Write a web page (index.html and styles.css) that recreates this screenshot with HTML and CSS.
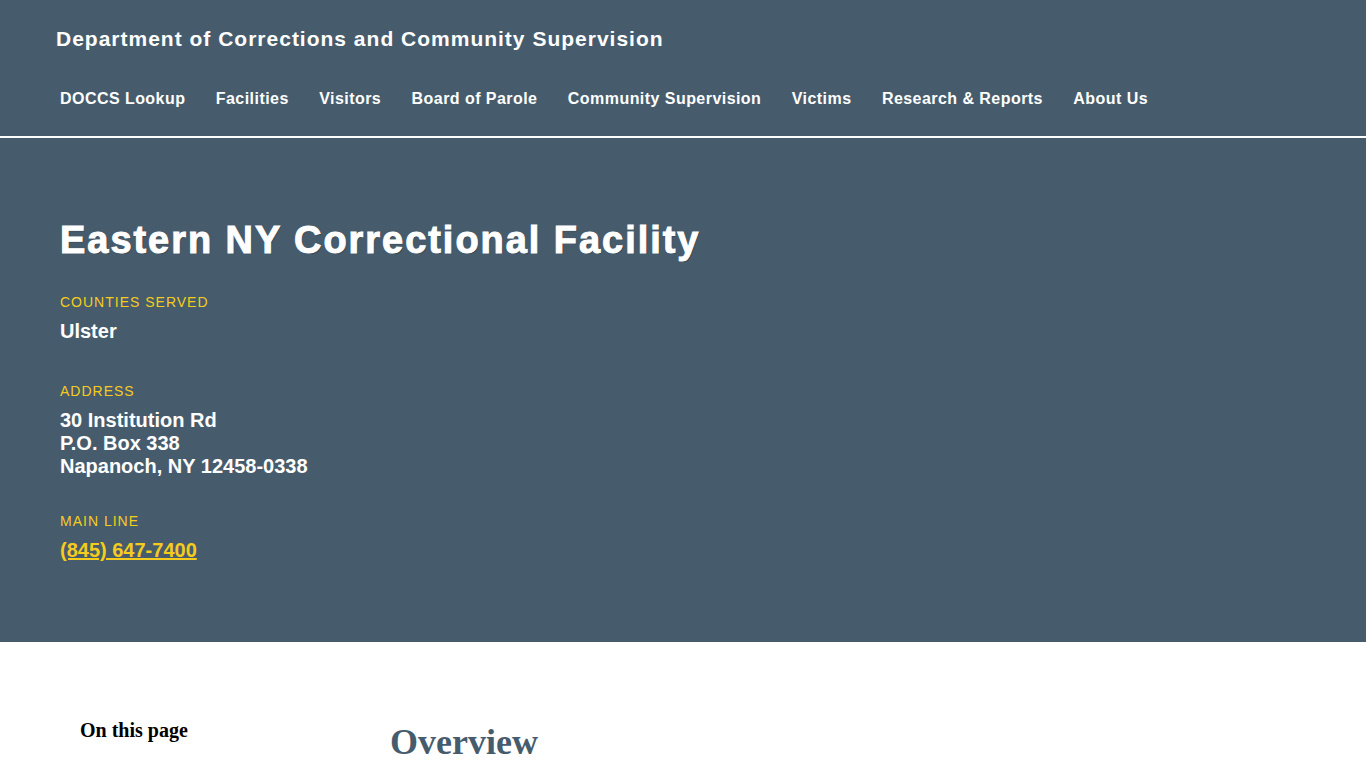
FILE: index.html
```html
<!DOCTYPE html>
<html lang="en">
<head>
<meta charset="utf-8">
<title>Eastern NY Correctional Facility</title>
<link rel="stylesheet" href="styles.css">
</head>
<body>
<header class="site-header">
  <div class="site-title">Department of Corrections and Community Supervision</div>
  <nav class="main-nav">
    <a href="#">DOCCS Lookup</a>
    <a href="#">Facilities</a>
    <a href="#">Visitors</a>
    <a href="#">Board of Parole</a>
    <a href="#">Community Supervision</a>
    <a href="#">Victims</a>
    <a href="#">Research &amp; Reports</a>
    <a href="#">About Us</a>
  </nav>
</header>
<section class="hero">
  <h1 class="hero-title">Eastern NY Correctional Facility</h1>
  <div class="field field-counties">
    <div class="field-label">COUNTIES SERVED</div>
    <div class="field-value">Ulster</div>
  </div>
  <div class="field field-address">
    <div class="field-label">ADDRESS</div>
    <div class="field-value">30 Institution Rd<br>P.O. Box 338<br>Napanoch, NY 12458-0338</div>
  </div>
  <div class="field field-phone">
    <div class="field-label">MAIN LINE</div>
    <div class="field-value"><a class="phone" href="#">(845) 647-7400</a></div>
  </div>
</section>
<main class="content">
  <aside class="toc">
    <h2 class="toc-title">On this page</h2>
  </aside>
  <article class="body">
    <h2 class="section-title">Overview</h2>
  </article>
</main>
</body>
</html>
```

FILE: styles.css
```css
html, body {
  margin: 0;
  padding: 0;
  background: #ffffff;
}

body {
  font-family: "Liberation Serif", "Times New Roman", serif;
}

.site-header {
  background: #465c6d;
  padding: 27px 0 27px 0;
  border-bottom: 2px solid #ffffff;
}

.site-title {
  font-family: "Liberation Sans", Arial, sans-serif;
  font-weight: bold;
  font-size: 21px;
  line-height: 24px;
  letter-spacing: 1px;
  color: #ffffff;
  padding-left: 56px;
}

.main-nav {
  display: flex;
  padding-left: 60px;
  margin-top: 38px;
  gap: 30.4px;
}

.main-nav a {
  font-family: "Liberation Sans", Arial, sans-serif;
  font-weight: bold;
  font-size: 16px;
  line-height: 20px;
  color: #ffffff;
  text-decoration: none;
  letter-spacing: 0.45px;
}

.hero {
  background: #465c6d;
  padding: 80px 60px 80px 60px;
  font-family: "Liberation Sans", Arial, sans-serif;
  color: #ffffff;
}

.hero-title {
  margin: 0;
  font-size: 38px;
  line-height: 44px;
  font-weight: 900;
  color: #ffffff;
  letter-spacing: 1.95px;
  -webkit-text-stroke: 1px #ffffff;
  text-shadow: 1px 1px 1px rgba(0,0,0,0.3);
}

.field-label {
  font-size: 14px;
  line-height: 18px;
  color: #f5cc1c;
  letter-spacing: 1px;
}

.field-value {
  font-size: 20px;
  line-height: 23px;
  font-weight: bold;
  margin-top: 9px;
}

.field-counties {
  margin-top: 31px;
}

.field-address {
  margin-top: 39px;
}

.field-phone {
  margin-top: 34px;
}

.phone {
  color: #f5cc1c;
  text-decoration: underline;
}

.content {
  display: flex;
  padding: 0 0 0 80px;
}

.toc {
  width: 310px;
}

.toc-title {
  margin: 76px 0 0 0;
  font-size: 20px;
  line-height: 24px;
  font-weight: bold;
  color: #000000;
}

.section-title {
  margin: 78px 0 0 0;
  font-size: 36px;
  line-height: 44px;
  font-weight: bold;
  color: #465c6d;
}
```
